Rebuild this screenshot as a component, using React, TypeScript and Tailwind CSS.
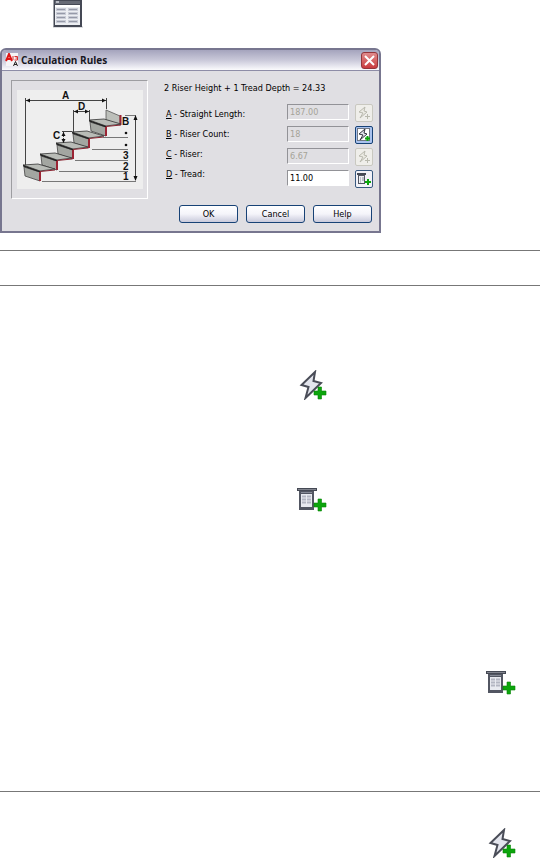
import React from 'react';

const fields = [
  { id: 'straight-length', hotkey: 'A', label: 'Straight Length:', value: '187.00', locked: true, action: 'Automatic', icon: 'bolt' },
  { id: 'riser-count', hotkey: 'B', label: 'Riser Count:', value: '18', locked: true, action: 'Set automatically', icon: 'active' },
  { id: 'riser', hotkey: 'C', label: 'Riser:', value: '6.67', locked: true, action: 'Automatic', icon: 'bolt' },
  { id: 'tread', hotkey: 'D', label: 'Tread:', value: '11.00', locked: false, action: 'User specified', icon: 'list' },
];

// --- ICONS ---

function TableIcon() {
  return (
    <svg className="block h-7 w-[30px]" viewBox="0 0 30 28">
      <rect x="0" y="26" width="30" height="2" fill="#dcdde0" />
      <rect x="0.5" y="0" width="28.5" height="27" fill="#454955" />
      <rect x="2" y="1" width="25" height="3" fill="#666a75" />
      <rect x="3" y="1" width="3" height="2" fill="#b9bcc4" />
      <rect x="2" y="5" width="25" height="20" fill="#eceef2" />
      <rect x="2" y="5" width="25" height="2" fill="#fff" />
      {[8, 12, 16, 20].map((y) => (
        <g key={y}>
          <rect x="3" y={y} width="10" height="3" fill="#c9ccd6" />
          <rect x="4" y={y + 1} width="8" height="1" fill="#969aa8" />
          <rect x="15" y={y} width="10" height="3" fill="#c9ccd6" />
          <rect x="16" y={y + 1} width="8" height="1" fill="#969aa8" />
        </g>
      ))}
    </svg>
  );
}

function BoltIcon({ className }: { className: string }) {
  return (
    <svg className={className} viewBox="0 0 28 30">
      <path d="M16 2 L2.500 15 L9.500 17 L6.500 28 L22 13 L14.500 11 Z" fill="#e3e5ed" stroke="#4a4d58" strokeWidth="2" strokeLinejoin="miter" />
      <path d="M19 17h3.500v4h4.500v4h-4.500v4h-3.500v-4h-4v-4h4z" fill="#0ca50c" stroke="#078507" strokeWidth="0.6" />
    </svg>
  );
}

function ListIcon({ className }: { className: string }) {
  return (
    <svg className={className} viewBox="0 0 30 25">
      <rect x="0" y="0" width="20" height="3" fill="#454954" />
      <rect x="1" y="1" width="18" height="1" fill="#81848e" />
      <rect x="2" y="3" width="15" height="19" fill="#525662" />
      <rect x="4" y="4" width="11" height="1" fill="#868a96" />
      <rect x="4" y="6" width="11" height="13" fill="#e8eaf0" />
      {[8, 11, 14].map((y) => (
        <g key={y}>
          <rect x="5" y={y - 0.5} width="4" height="2" fill="#b3b6c2" />
          <rect x="10" y={y - 0.5} width="4" height="2" fill="#b3b6c2" />
        </g>
      ))}
      <path d="M21 11h3.500v4h4.500v4h-4.500v4h-3.500v-4h-4v-4h4z" fill="#0ca50c" stroke="#078507" strokeWidth="0.6" />
    </svg>
  );
}

function SmallBolt({ active }: { active: boolean }) {
  return (
    <svg className="block size-4" viewBox="0 0 16 16">
      {active && <rect x="1.500" y="1.500" width="12" height="12" fill="#fff" stroke="#111" strokeDasharray="1 1" />}
      <path
        d="M9 2 L3 7 L7 8 L4 13 L11 7 L8 6 Z"
        fill={active ? '#e3e5ed' : '#ecebe4'}
        stroke={active ? '#333640' : '#b9b9ae'}
      />
      <path d="M11.500 9v5M9 11.500h5" fill="none" stroke={active ? '#0ca50c' : '#b9b9ae'} strokeWidth={active ? 2 : 1} />
    </svg>
  );
}

function SmallList() {
  return (
    <svg className="block size-4" viewBox="0 0 16 16">
      <rect x="1" y="2" width="9" height="2" fill="#454954" />
      <rect x="2.500" y="4.500" width="6" height="8" fill="#eef0f4" stroke="#525662" />
      <path d="M4 7h1M6 7h2M4 9h1M6 9h2M4 11h1" stroke="#8a8d9a" />
      <path d="M12 8v6M9 11h6" fill="none" stroke="#0ca50c" strokeWidth="2" />
    </svg>
  );
}

function AppLogo() {
  return (
    <svg className="block size-[14px]" viewBox="0 0 14 14">
      <rect x="1" y="0" width="12" height="13" fill="#f6f4f6" />
      <path d="M1 8 L4 1 L7 8 M2 6h4" fill="none" stroke="#e01414" strokeWidth="2" />
      <path d="M8 3v4M9.500 3.500h3v1.500h-2M12.500 5v2h-3" fill="none" stroke="#d83030" />
      <path d="M8.500 13 L10.500 8.500 L12.500 13 M9 11.500h3" fill="none" stroke="#222" />
    </svg>
  );
}

// --- STAIR DIAGRAM ---

const steps = [
  { x: 6, y: 75 },
  { x: 23, y: 64 },
  { x: 39, y: 53 },
  { x: 55, y: 42 },
  { x: 72, y: 30 },
];

function StairDiagram() {
  return (
    <svg className="block h-[99px] w-[126px]" viewBox="0 0 126 99">
      <rect width="126" height="99" fill="#eeeeee" />
      <path d="M89 20 L103 26 V35 L89 30 Z" fill="#bcbfba" stroke="#555" strokeWidth="0.8" />
      <path d="M103.500 25V35" stroke="#9c2434" strokeWidth="2" />
      {[...steps].reverse().map((s) => (
        <g key={s.x}>
          <path d={`M${s.x + 1} ${s.y + 2} L${s.x + 17} ${s.y + 7} V${s.y + 16} L${s.x + 2} ${s.y + 11} Z`} fill="#a3a6a1" stroke="#444" strokeWidth="0.8" />
          <path d={`M${s.x} ${s.y} L${s.x + 15} ${s.y - 1} L${s.x + 32} ${s.y + 4} L${s.x + 17} ${s.y + 6} Z`} fill="#b9bcb7" stroke="#333" strokeWidth="0.8" />
          <path d={`M${s.x} ${s.y} L${s.x + 17} ${s.y + 6} V${s.y + 7.5} L${s.x} ${s.y + 1.5} Z`} fill="#222" />
          <path d={`M${s.x + 17} ${s.y + 6.5} L${s.x + 32} ${s.y + 5}`} fill="none" stroke="#8a2430" />
          <path d={`M${s.x + 17} ${s.y + 7} V${s.y + 16}`} fill="none" stroke="#9c2434" strokeWidth="2" />
        </g>
      ))}
      <g stroke="#444" fill="none">
        <path d="M8.500 8V75M89.500 8V19M9 10.500H89M56.500 20V42M72.500 20V30M57 21.500H72M45 41.500H55" />
        <path d="M46.500 42V53" strokeDasharray="2 1" />
        <path d="M108 25.500H119M86 47.500H111M75 59.500H111M58 70.500H111M42 81.500H111M25 91.500H119" stroke="#777" />
        <path d="M118.500 28V90" />
      </g>
      <path d="M9 10.500l4-2v4zM89 10.500l-4-2v4zM57 21.500l4-2v4zM72 21.500l-4-2v4zM46.500 42l-2 4h4zM46.500 53l-2-4h4zM118.500 25l-2 5h4zM118.500 91l-2-5h4z" fill="#111" />
      <g className="font-['Liberation_Sans',sans-serif] text-[10px] font-bold" fill="#111">
        <text x="45" y="9">A</text>
        <text x="61" y="20">D</text>
        <text x="36" y="49">C</text>
        <text x="105" y="35">B</text>
        <text x="106" y="69">3</text>
        <text x="106" y="80">2</text>
        <text x="106" y="90">1</text>
      </g>
      <circle cx="109" cy="43" r="1.300" fill="#111" />
      <circle cx="109" cy="55" r="1.300" fill="#111" />
    </svg>
  );
}

// --- DIALOG ---

function CalculationRules() {
  const buttonClasses =
    'h-[18px] w-[59px] rounded-[3px] border border-[#174276] bg-linear-to-b from-white via-[#f4f4fa] to-[#c9cadb] leading-4';

  return (
    <section
      aria-labelledby="dialog-title"
      className="w-full max-w-[381px] rounded-t-md border-2 border-[#77768f] bg-[#e0dfe3] font-['DejaVu_Sans_Condensed','DejaVu_Sans',sans-serif] text-[9px] text-black"
    >
      <header className="flex h-[21px] items-center rounded-t-sm border-b border-[#8e8da7] bg-linear-to-b from-[#a5a4bd] via-[#c9c8d9] to-[#fbfbfd] pr-px pl-[3px]">
        <AppLogo />
        <h1 id="dialog-title" className="ml-[2px] flex-1 font-['Open_Sans',sans-serif] text-[10px] font-bold text-[#17171f]">
          Calculation Rules
        </h1>
        <button aria-label="Close" className="flex size-[17px] items-center justify-center rounded-[3px] border border-[#94353b] bg-linear-to-b from-[#df8a8c] to-[#c9393e]">
          <svg className="size-[11px]" viewBox="0 0 11 11">
            <path d="M1 1l9 9M10 1l-9 9" stroke="#fff" strokeWidth="2" />
          </svg>
        </button>
      </header>

      <div className="flex pt-[9px] pr-[6px] pl-[9px]">
        <div className="flex h-[119px] w-[137px] shrink-0 items-center justify-center border border-t-[#9d9da1] border-r-white border-b-white border-l-[#9d9da1]">
          <StairDiagram />
        </div>

        <div className="ml-4 flex-1">
          <p className="leading-4">2 Riser Height + 1 Tread Depth = 24.33</p>
          <div className="mt-2 flex">
            <div className="flex-1 pl-[2px]">
              {fields.map((f) => (
                <label key={f.id} htmlFor={f.id} className="block leading-5 whitespace-nowrap">
                  <span className="underline">{f.hotkey}</span> - {f.label}
                </label>
              ))}
            </div>
            <div className="flex flex-col gap-[6px]">
              {fields.map((f) => (
                <input
                  key={f.id}
                  id={f.id}
                  defaultValue={f.value}
                  disabled={f.locked}
                  className="h-4 w-[62px] border border-t-[#929297] border-r-white border-b-white border-l-[#929297] bg-white px-[2px] leading-3 disabled:bg-[#e0dfe3] disabled:text-[#a5a398]"
                />
              ))}
            </div>
            <div className="ml-[6px] flex flex-col gap-1">
              {fields.map((f) => (
                <button
                  key={f.id}
                  aria-label={f.action}
                  disabled={f.icon === 'bolt'}
                  className={`flex size-[18px] items-center justify-center rounded-[2px] border ${
                    f.icon === 'bolt' ? 'border-[#c9c8c0] bg-[#efeeea]' : f.icon === 'active' ? 'border-[#174276] bg-[#a9c2ee]' : 'border-[#38597f] bg-[#f2f2f8]'
                  }`}
                >
                  {f.icon === 'list' ? <SmallList /> : <SmallBolt active={f.icon === 'active'} />}
                </button>
              ))}
            </div>
          </div>
        </div>
      </div>

      <div className="flex justify-end gap-2 pt-[6px] pr-[7px] pb-2">
        <button className={buttonClasses}>OK</button>
        <button className={buttonClasses}>Cancel</button>
        <button className={buttonClasses}>Help</button>
      </div>
    </section>
  );
}

export default function App() {
  return (
    <main className="w-full overflow-hidden bg-white">
      <div className="pl-[53px]">
        <TableIcon />
      </div>

      <div className="mt-5">
        <CalculationRules />
      </div>

      <hr className="mt-[17px] border-[#777]" />
      <hr className="mt-[34px] border-[#777]" />

      <div className="mt-[84px] pl-[299px]">
        <BoltIcon className="block h-[30px] w-7" />
      </div>
      <div className="mt-[88px] pl-[297px]">
        <ListIcon className="block h-[25px] w-[30px]" />
      </div>
      <div className="mt-[158px] flex justify-end pr-6">
        <ListIcon className="block h-[25px] w-[30px]" />
      </div>

      <hr className="mt-[95px] border-[#777]" />

      <div className="mt-[36px] flex justify-end pr-6">
        <BoltIcon className="block h-[30px] w-7" />
      </div>
    </main>
  );
}
